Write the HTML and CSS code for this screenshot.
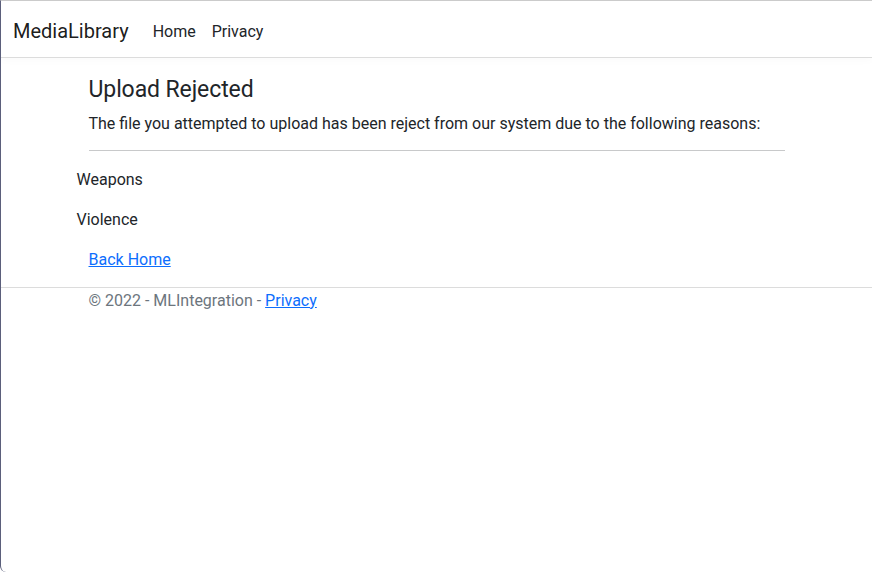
FILE: index.html
```html
<!DOCTYPE html>
<html lang="en">
<head>
<meta charset="utf-8">
<title>Upload Rejected - MediaLibrary</title>
<link rel="stylesheet" href="styles.css">
</head>
<body>
<div class="window">
  <header>
    <nav class="navbar">
      <div class="navbar-inner">
        <a class="brand" href="#">MediaLibrary</a>
        <ul class="nav">
          <li><a class="nav-link" href="#">Home</a></li>
          <li><a class="nav-link" href="#">Privacy</a></li>
        </ul>
      </div>
    </nav>
  </header>
  <div class="container">
    <main class="main">
      <h4 class="title">Upload Rejected</h4>
      <p class="lead-text">The file you attempted to upload has been reject from our system due to the following reasons:</p>
      <hr class="divider">
      <div class="reasons">
        <p class="reason">Weapons</p>
        <p class="reason">Violence</p>
      </div>
      <div class="back"><a class="link" href="#">Back Home</a></div>
    </main>
  </div>
  <footer class="footer">
    <div class="container">
      &copy; 2022 - MLIntegration - <a class="link" href="#">Privacy</a>
    </div>
  </footer>
</div>
</body>
</html>
```
FILE: styles.css
```css
* { box-sizing: border-box; }
html, body { margin: 0; padding: 0; height: 100%; }
body {
  font-family: Roboto, "Liberation Sans", sans-serif;
  font-size: 16px;
  line-height: 1.5;
  color: #212529;
  background: #fff;
}
.window {
  height: 100%;
  border-top: 1px solid #cbcbcb;
  border-left: 1px solid #5b5f7b;
  border-bottom-left-radius: 6px;
  overflow: hidden;
}
.navbar {
  padding: 10px 0 6px;
  border-bottom: 1px solid #dcdcdc;
  box-shadow: 0 3px 8px rgba(0,0,0,.02);
  margin-bottom: 17px;
}
.navbar-inner {
  display: flex;
  align-items: center;
  padding: 0 12px;
}
.brand {
  font-size: 20px;
  line-height: 30px;
  padding: 5px 0;
  margin-right: 16px;
  color: rgba(0,0,0,.9);
  text-decoration: none;
}
.nav {
  display: flex;
  list-style: none;
  margin: 0;
  padding: 0;
}
.nav-link {
  display: block;
  padding: 9px 8px 7px;
  color: #212529;
  text-decoration: none;
}
.container {
  max-width: 720px;
  margin: 0 auto;
  padding: 0 12px;
}
.main { padding-bottom: 15px; }
.title {
  font-size: 23px;
  font-weight: 400;
  line-height: 1.2;
  padding-top: 1px;
  margin: 0 0 8px;
  letter-spacing: -0.1px;
}
.lead-text { margin: 0; }
.divider {
  margin: 14px 0 16px;
  border: 0;
  border-top: 1px solid #c8c9ca;
  height: 0;
}
.reasons { margin-left: -12px; }
.reason { margin: 0 0 15px; padding-top: 1px; }
.back { padding-top: 1px; }
.link { color: #0d6efd; text-decoration: underline; }
.footer {
  border-top: 1px solid #dcdcdc;
  color: #6c757d;
  padding-top: 1px;
}
```
